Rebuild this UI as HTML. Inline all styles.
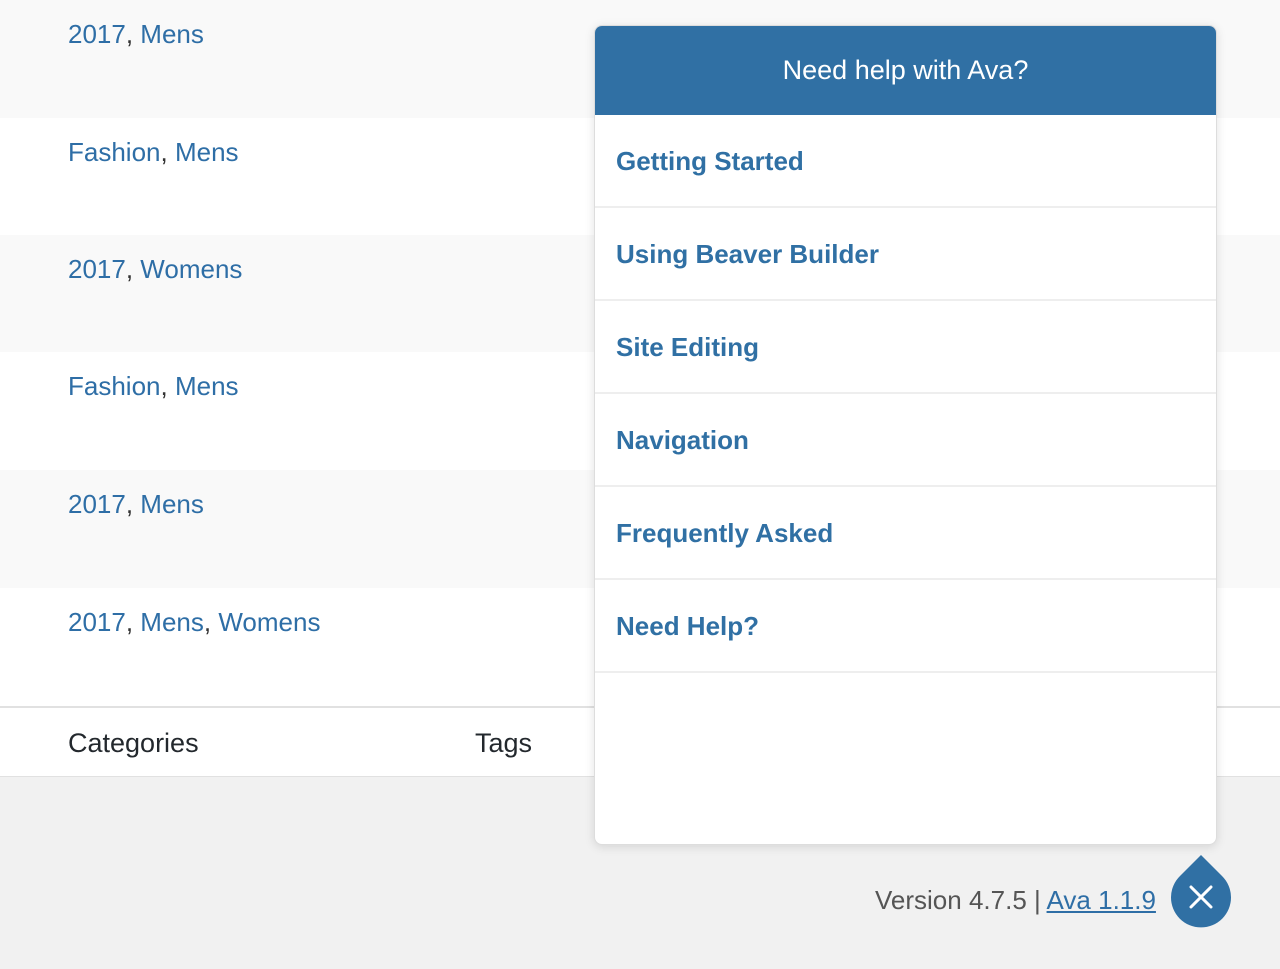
<!DOCTYPE html><html><head><style>
body{margin:0;width:1280px;height:969px;background:#f1f1f1;font-family:"Liberation Sans",sans-serif;position:relative;overflow:hidden}
.row{position:absolute;left:0;width:1280px;height:118px}
.row span{position:absolute;left:68px;top:19px;font-size:26px;color:#2e6ea6}
.row i{color:#333;font-style:normal}
.foot{position:absolute;left:0;top:706px;width:1280px;height:71px;background:#fff;border-top:2px solid #e1e1e1;border-bottom:1px solid #e1e1e1;box-sizing:border-box}
.foot span{position:absolute;top:20px;font-size:27px;color:#23282d}
.panel{position:absolute;left:594px;top:25px;width:623px;height:820px;background:#fff;border:1px solid #ddd;border-radius:8px;box-shadow:0 2px 10px rgba(0,0,0,.12);overflow:hidden;box-sizing:border-box}
.hd{height:89px;background:#3070a4;color:#fff;font-size:27px;text-align:center;line-height:89px}
.it{height:93px;border-bottom:2px solid #eee;box-sizing:border-box;padding-left:21px;line-height:92px;font-size:26px;font-weight:bold;color:#3070a4}
.ver{position:absolute;left:875px;top:885px;font-size:26px;color:#555}
.ver a{color:#2e6ea6;text-decoration:underline}
</style></head><body>
<div class="row" style="top:0;background:#f9f9f9"><span>2017<i>,</i> Mens</span></div>
<div class="row" style="top:118px;background:#fff"><span>Fashion<i>,</i> Mens</span></div>
<div class="row" style="top:235px;background:#f9f9f9"><span>2017<i>,</i> Womens</span></div>
<div class="row" style="top:352px;background:#fff"><span>Fashion<i>,</i> Mens</span></div>
<div class="row" style="top:470px;background:#f9f9f9"><span>2017<i>,</i> Mens</span></div>
<div class="row" style="top:588px;height:118px;background:#fff"><span>2017<i>,</i> Mens<i>,</i> Womens</span></div>
<div class="foot"><span style="left:68px">Categories</span><span style="left:475px">Tags</span></div>
<div class="panel"><div class="hd">Need help with Ava?</div>
<div class="it">Getting Started</div><div class="it">Using Beaver Builder</div><div class="it">Site Editing</div><div class="it">Navigation</div><div class="it">Frequently Asked</div><div class="it">Need Help?</div></div>
<div class="ver">Version 4.7.5 | <a>Ava 1.1.9</a></div>
<svg style="position:absolute;left:1170px;top:853px" width="62" height="76" viewBox="0 0 62 76"><path d="M31 2 L52 23 A30 30 0 1 1 10 23 Z" fill="#3070a4"/><path d="M21 34 L41 54 M41 34 L21 54" stroke="#fff" stroke-width="3" stroke-linecap="round"/></svg>
</body></html>
